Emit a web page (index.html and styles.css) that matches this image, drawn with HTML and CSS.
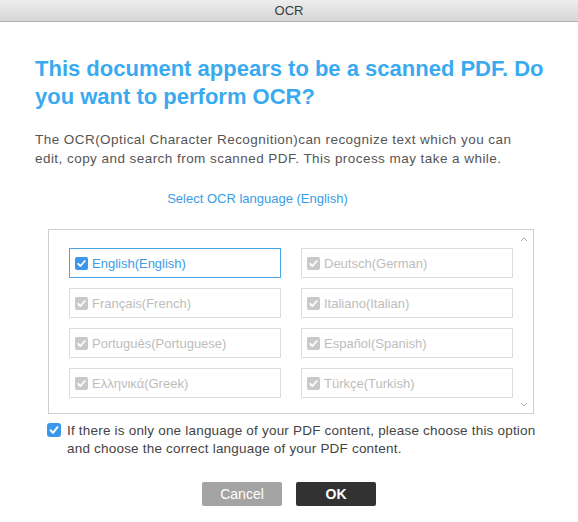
FILE: index.html
```html
<!DOCTYPE html>
<html>
<head>
<meta charset="utf-8">
<link rel="stylesheet" href="styles.css">
</head>
<body>
<div class="window">
  <div class="titlebar">OCR</div>
  <div class="content">
    <h1 class="heading">This document appears to be a scanned PDF. Do you want to perform OCR?</h1>
    <p class="desc">The OCR(Optical Character Recognition)can recognize text which you can edit, copy and search from scanned PDF. This process may take a while.</p>
    <div class="select-label">Select OCR language (English)</div>
    <div class="langbox">
      <div class="grid">
        <div class="item selected"><span class="cb on"><svg viewBox="0 0 13 13"><path d="M3.2 6.8 L5.5 9 L9.8 4" fill="none" stroke="#fff" stroke-width="1.8" stroke-linecap="round" stroke-linejoin="round"/></svg></span>English(English)</div>
        <div class="item"><span class="cb"><svg viewBox="0 0 13 13"><path d="M3.2 6.8 L5.5 9 L9.8 4" fill="none" stroke="#fff" stroke-width="1.8" stroke-linecap="round" stroke-linejoin="round"/></svg></span>Deutsch(German)</div>
        <div class="item"><span class="cb"><svg viewBox="0 0 13 13"><path d="M3.2 6.8 L5.5 9 L9.8 4" fill="none" stroke="#fff" stroke-width="1.8" stroke-linecap="round" stroke-linejoin="round"/></svg></span>Français(French)</div>
        <div class="item"><span class="cb"><svg viewBox="0 0 13 13"><path d="M3.2 6.8 L5.5 9 L9.8 4" fill="none" stroke="#fff" stroke-width="1.8" stroke-linecap="round" stroke-linejoin="round"/></svg></span>Italiano(Italian)</div>
        <div class="item"><span class="cb"><svg viewBox="0 0 13 13"><path d="M3.2 6.8 L5.5 9 L9.8 4" fill="none" stroke="#fff" stroke-width="1.8" stroke-linecap="round" stroke-linejoin="round"/></svg></span>Português(Portuguese)</div>
        <div class="item"><span class="cb"><svg viewBox="0 0 13 13"><path d="M3.2 6.8 L5.5 9 L9.8 4" fill="none" stroke="#fff" stroke-width="1.8" stroke-linecap="round" stroke-linejoin="round"/></svg></span>Español(Spanish)</div>
        <div class="item"><span class="cb"><svg viewBox="0 0 13 13"><path d="M3.2 6.8 L5.5 9 L9.8 4" fill="none" stroke="#fff" stroke-width="1.8" stroke-linecap="round" stroke-linejoin="round"/></svg></span>Ελληνικά(Greek)</div>
        <div class="item"><span class="cb"><svg viewBox="0 0 13 13"><path d="M3.2 6.8 L5.5 9 L9.8 4" fill="none" stroke="#fff" stroke-width="1.8" stroke-linecap="round" stroke-linejoin="round"/></svg></span>Türkçe(Turkish)</div>
      </div>
      <div class="scroll">
        <svg class="arrow" viewBox="0 0 8 5"><path d="M1 4 L4 1 L7 4" fill="none" stroke="#aaa" stroke-width="1"/></svg>
        <svg class="arrow" viewBox="0 0 8 5"><path d="M1 1 L4 4 L7 1" fill="none" stroke="#aaa" stroke-width="1"/></svg>
      </div>
    </div>
    <div class="option">
      <span class="cb big on"><svg viewBox="0 0 14 14"><path d="M3.5 7.2 L6 9.8 L10.5 4.2" fill="none" stroke="#fff" stroke-width="1.9" stroke-linecap="round" stroke-linejoin="round"/></svg></span>
      <span class="option-text">If there is only one language of your PDF content, please choose this option and choose the correct language of your PDF content.</span>
    </div>
    <div class="buttons">
      <button class="btn cancel">Cancel</button>
      <button class="btn ok">OK</button>
    </div>
  </div>
</div>
</body>
</html>
```
FILE: styles.css
```css
html, body {
  margin: 0;
  padding: 0;
  background: #fff;
}
body {
  font-family: "Liberation Sans", Arial, sans-serif;
  width: 578px;
  height: 522px;
  overflow: hidden;
}
.window {
  width: 578px;
  height: 522px;
  display: flex;
  flex-direction: column;
}
.titlebar {
  height: 21px;
  line-height: 22px;
  text-align: center;
  font-size: 13px;
  color: #3a3a3a;
  background: linear-gradient(#ededed, #d6d6d6);
  border-bottom: 1px solid #b3b3b3;
}
.content {
  padding: 0 0 0 35px;
  display: flex;
  flex-direction: column;
}
.heading {
  margin: 33px 0 0 0;
  font-size: 22px;
  line-height: 28px;
  font-weight: bold;
  color: #3aaaf0;
  width: 530px;
}
.desc {
  margin: 19px 0 0 0;
  font-size: 13.5px;
  line-height: 19px;
  color: #555;
  width: 490px;
  letter-spacing: 0.45px;
}
.select-label {
  margin: 23px 0 0 0;
  width: 445px;
  text-align: center;
  font-size: 13px;
  color: #3a9de6;
}
.langbox {
  margin: 23px 0 0 13px;
  width: 484px;
  height: 183px;
  border: 1px solid #cfcfcf;
  box-sizing: content-box;
  display: flex;
}
.grid {
  padding: 18px 0 0 20px;
  display: grid;
  grid-template-columns: 212px 212px;
  grid-auto-rows: 30px;
  column-gap: 20px;
  row-gap: 10px;
}
.item {
  box-sizing: border-box;
  border: 1px solid #dcdcdc;
  display: flex;
  align-items: center;
  padding-left: 5px;
  font-size: 13px;
  color: #bdbdbd;
}
.item.selected {
  border-color: #4aa6e6;
  color: #3a9de6;
}
.cb {
  width: 13px;
  height: 13px;
  border-radius: 2px;
  background: #c9c9c9;
  display: inline-flex;
  margin-right: 4px;
  flex: none;
}
.cb svg {
  width: 100%;
  height: 100%;
}
.cb.on {
  background: #3b97ec;
}
.scroll {
  flex: 1;
  display: flex;
  flex-direction: column;
  justify-content: space-between;
  align-items: flex-end;
  padding: 7px 5px 6px 0;
}
.arrow {
  width: 8px;
  height: 5px;
}
.option {
  margin: 8px 0 0 12px;
  display: flex;
  align-items: flex-start;
}
.cb.big {
  width: 14px;
  height: 14px;
  border-radius: 3px;
  margin: 1px 6px 0 0;
}
.option-text {
  font-size: 13.5px;
  line-height: 18px;
  color: #444;
  width: 476px;
  letter-spacing: 0.2px;
}
.buttons {
  margin: 24px 0 0 167px;
  display: flex;
  gap: 14px;
}
.btn {
  width: 80px;
  height: 24px;
  border: none;
  border-radius: 2px;
  font-family: "Liberation Sans", Arial, sans-serif;
  font-size: 14px;
  color: #fff;
  padding: 0;
}
.cancel {
  background: #a4a4a4;
}
.ok {
  background: #323232;
  font-weight: bold;
}
```
